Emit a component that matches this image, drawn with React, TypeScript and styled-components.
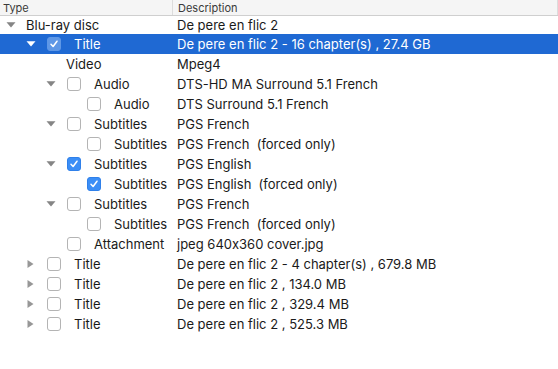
import styled, { createGlobalStyle } from "styled-components";

type Node = {
  level: number;
  type: string;
  desc: string;
  toggle?: "open" | "closed";
  check?: boolean;
  hasCheck?: boolean;
  selected?: boolean;
};

const rows: Node[] = [
  { level: 0, type: "Blu-ray disc", desc: "De pere en flic 2", toggle: "open" },
  { level: 1, type: "Title", desc: "De pere en flic 2 - 16 chapter(s) , 27.4 GB", toggle: "open", hasCheck: true, check: true, selected: true },
  { level: 2, type: "Video", desc: "Mpeg4" },
  { level: 2, type: "Audio", desc: "DTS-HD MA Surround 5.1 French", toggle: "open", hasCheck: true },
  { level: 3, type: "Audio", desc: "DTS Surround 5.1 French", hasCheck: true },
  { level: 2, type: "Subtitles", desc: "PGS French", toggle: "open", hasCheck: true },
  { level: 3, type: "Subtitles", desc: "PGS French  (forced only)", hasCheck: true },
  { level: 2, type: "Subtitles", desc: "PGS English", toggle: "open", hasCheck: true, check: true },
  { level: 3, type: "Subtitles", desc: "PGS English  (forced only)", hasCheck: true, check: true },
  { level: 2, type: "Subtitles", desc: "PGS French", toggle: "open", hasCheck: true },
  { level: 3, type: "Subtitles", desc: "PGS French  (forced only)", hasCheck: true },
  { level: 2, type: "Attachment", desc: "jpeg 640x360 cover.jpg", hasCheck: true },
  { level: 1, type: "Title", desc: "De pere en flic 2 - 4 chapter(s) , 679.8 MB", toggle: "closed", hasCheck: true },
  { level: 1, type: "Title", desc: "De pere en flic 2 , 134.0 MB", toggle: "closed", hasCheck: true },
  { level: 1, type: "Title", desc: "De pere en flic 2 , 329.4 MB", toggle: "closed", hasCheck: true },
  { level: 1, type: "Title", desc: "De pere en flic 2 , 525.3 MB", toggle: "closed", hasCheck: true },
];

const GlobalStyle = createGlobalStyle`
  html, body {
    margin: 0;
    padding: 0;
    background: #fff;
  }
  body {
    font-family: Inter, "Liberation Sans", Arial, sans-serif;
    font-feature-settings: "calt" 0;
  }
`;

const Outline = styled.div`
  width: 558px;
  height: 369px;
  background: #fff;
  overflow: hidden;
`;

const Header = styled.div`
  display: flex;
  height: 15px;
  background: #f5f5f5;
  border-bottom: 1px solid #cfcfcf;
  font-size: 11px;
  color: #3a3a3a;
`;

const HeaderCell = styled.div<{ $w?: number }>`
  display: flex;
  align-items: center;
  box-sizing: border-box;
  ${(p) => (p.$w ? `width: ${p.$w}px;` : "flex: 1;")}
  padding-left: ${(p) => (p.$w ? 3 : 5)}px;
  height: 100%;
  border-right: 1px solid #dcdcdc;
`;

const Row = styled.div<{ $selected?: boolean; $h: number }>`
  display: flex;
  align-items: center;
  height: ${(p) => p.$h}px;
  font-size: 13px;
  color: ${(p) => (p.$selected ? "#fff" : "#1a1a1a")};
  background: ${(p) => (p.$selected ? "#1f69d3" : "transparent")};
`;

const TypeCell = styled.div<{ $level: number }>`
  display: flex;
  align-items: center;
  width: 172px;
  flex-shrink: 0;
  box-sizing: border-box;
  padding-left: ${(p) => 6 + p.$level * 20}px;
  white-space: nowrap;
`;

const DescCell = styled.div`
  padding-left: 5px;
  white-space: pre;
`;

const Disclosure = styled.span`
  display: flex;
  align-items: center;
  width: 20px;
  height: 10px;
  flex-shrink: 0;
`;

const Box = styled.span<{ $on?: boolean; $sel?: boolean }>`
  display: flex;
  align-items: center;
  justify-content: center;
  box-sizing: border-box;
  width: 14px;
  height: 14px;
  margin-left: 1px;
  margin-right: 13px;
  border-radius: 3px;
  flex-shrink: 0;
  background: ${(p) => (p.$sel ? "#5e97e6" : p.$on ? "#3b8ef6" : "#fff")};
  border: 1px solid ${(p) => (p.$sel ? "#5e97e6" : p.$on ? "#2f80ea" : "#b4b4b4")};
`;

const Triangle = ({ dir, sel }: { dir: "open" | "closed"; sel?: boolean }) => (
  <svg width="10" height="10" viewBox="0 0 10 10">
    {dir === "open" ? (
      <path d="M0.5 2.2 L9.5 2.2 L5 7.6 Z" fill={sel ? "#fff" : "#858585"} />
    ) : (
      <path d="M1.5 1 L7.5 5 L1.5 9 Z" fill="#979797" />
    )}
  </svg>
);

const Check = () => (
  <svg width="10" height="10" viewBox="0 0 10 10">
    <path d="M2 5.3 L4.1 7.5 L8 2.2" fill="none" stroke="#fff" strokeWidth="1.5" strokeLinecap="round" strokeLinejoin="round" />
  </svg>
);

const App = () => {
  return (
    <Outline>
      <GlobalStyle />
      <Header>
        <HeaderCell $w={173}>Type</HeaderCell>
        <HeaderCell>Description</HeaderCell>
      </Header>
      {rows.map((r, i) => (
        <Row key={i} $selected={r.selected} $h={i === 0 ? 18 : 20}>
          <TypeCell $level={r.level}>
            <Disclosure>{r.toggle && <Triangle dir={r.toggle} sel={r.selected} />}</Disclosure>
            {r.hasCheck && (
              <Box $on={r.check} $sel={r.selected}>
                {r.check && <Check />}
              </Box>
            )}
            {r.type}
          </TypeCell>
          <DescCell>{r.desc}</DescCell>
        </Row>
      ))}
    </Outline>
  );
};

export default App;
